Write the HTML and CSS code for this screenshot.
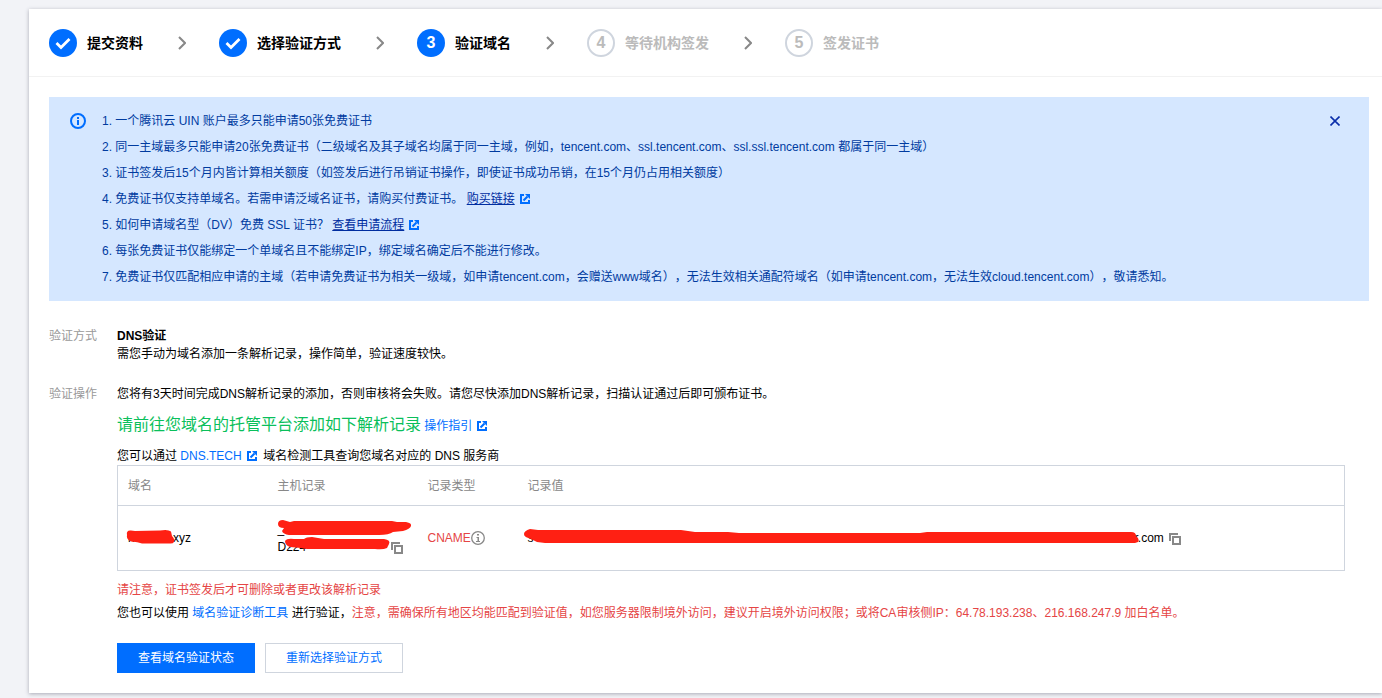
FILE: index.html
```
<!DOCTYPE html>
<html lang="zh-CN">
<head>
    <meta charset="UTF-8">
    <meta name="viewport" content="width=device-width, initial-scale=1.0">
    <title>验证域名</title>
    <link rel="stylesheet" href="styles.css">
</head>
<body>
    <!-- shared icons -->
    <svg class="sprite" aria-hidden="true">
        <symbol id="icon-check" viewBox="0 0 28 28">
            <path d="M7.500 14l4.500 4.500 8.500-8.500" fill="none" stroke="#fff" stroke-width="2.800"/>
        </symbol>
        <symbol id="icon-arrow" viewBox="0 0 8 14">
            <path d="M1 1l6 6-6 6" fill="none" stroke="#888" stroke-width="2"/>
        </symbol>
        <symbol id="icon-link" viewBox="0 0 10 10">
            <path d="M4 1H1v8h8V6M3.500 6.500l4-4" fill="none" stroke="#006eff" stroke-width="2"/>
            <path d="M5 0h5v5z" fill="#006eff"/>
        </symbol>
        <symbol id="icon-copy" viewBox="0 0 12 12">
            <path d="M1 8V1h8M5 4h6v7H4V4z" fill="none" stroke="#888" stroke-width="2"/>
        </symbol>
        <symbol id="icon-info" viewBox="0 0 16 16">
            <circle cx="8" cy="8" r="7" fill="none" stroke="currentColor" stroke-width="2"/>
            <path d="M7 4h2v2H7zM7 7h2v5H7z" fill="currentColor"/>
        </symbol>
        <symbol id="icon-info-thin" viewBox="0 0 14 14">
            <circle cx="7" cy="7" r="6.300" fill="none" stroke="currentColor" stroke-width="1.300"/>
            <path d="M6 3h2v1.500H6zM5.500 6H8v4h1v1H5v-1h1.500V7h-1z" fill="currentColor"/>
        </symbol>
    </svg>

    <main class="card">
        <ol class="steps">
            <li class="step">
                <span class="step-num"><svg width="28" height="28"><use href="#icon-check"/></svg></span>
                <span>提交资料</span>
                <svg class="step-arrow"><use href="#icon-arrow"/></svg>
            </li>
            <li class="step">
                <span class="step-num"><svg width="28" height="28"><use href="#icon-check"/></svg></span>
                <span>选择验证方式</span>
                <svg class="step-arrow"><use href="#icon-arrow"/></svg>
            </li>
            <li class="step">
                <span class="step-num">3</span>
                <span>验证域名</span>
                <svg class="step-arrow"><use href="#icon-arrow"/></svg>
            </li>
            <li class="step disabled">
                <span class="step-num">4</span>
                <span>等待机构签发</span>
                <svg class="step-arrow"><use href="#icon-arrow"/></svg>
            </li>
            <li class="step disabled">
                <span class="step-num">5</span>
                <span>签发证书</span>
            </li>
        </ol>

        <div class="content">
            <div class="alert">
                <svg class="alert-icon"><use href="#icon-info"/></svg>
                <div class="alert-list">
                    <p>1. 一个腾讯云 UIN 账户最多只能申请50张免费证书</p>
                    <p>2. 同一主域最多只能申请20张免费证书（二级域名及其子域名均属于同一主域，例如，tencent.com、ssl.tencent.com、ssl.ssl.tencent.com 都属于同一主域）</p>
                    <p>3. 证书签发后15个月内皆计算相关额度（如签发后进行吊销证书操作，即使证书成功吊销，在15个月仍占用相关额度）</p>
                    <p>4. 免费证书仅支持单域名。若需申请泛域名证书，请购买付费证书。 <a href="#">购买链接</a><svg class="link-icon"><use href="#icon-link"/></svg></p>
                    <p>5. 如何申请域名型（DV）免费 SSL 证书？ <a href="#">查看申请流程</a><svg class="link-icon"><use href="#icon-link"/></svg></p>
                    <p>6. 每张免费证书仅能绑定一个单域名且不能绑定IP，绑定域名确定后不能进行修改。</p>
                    <p>7. 免费证书仅匹配相应申请的主域（若申请免费证书为相关一级域，如申请tencent.com，会赠送www域名），无法生效相关通配符域名（如申请tencent.com，无法生效cloud.tencent.com），敬请悉知。</p>
                </div>
                <button class="close" aria-label="关闭">
                    <svg width="10" height="10" viewBox="0 0 10 10"><path d="M.5.5l9 9M9.500.5l-9 9" stroke="#0a2eaa" stroke-width="1.600"/></svg>
                </button>
            </div>

            <div class="row">
                <div class="row-label">验证方式</div>
                <div class="row-value">
                    <p><b>DNS验证</b></p>
                    <p>需您手动为域名添加一条解析记录，操作简单，验证速度较快。</p>
                </div>
            </div>

            <div class="row">
                <div class="row-label">验证操作</div>
                <div class="row-value">
                    <p>您将有3天时间完成DNS解析记录的添加，否则审核将会失败。请您尽快添加DNS解析记录，扫描认证通过后即可颁布证书。</p>
                    <p class="guide"><span>请前往您域名的托管平台添加如下解析记录</span> <a href="#">操作指引</a><svg class="link-icon"><use href="#icon-link"/></svg></p>
                    <p>您可以通过 <a href="#">DNS.TECH</a><svg class="link-icon"><use href="#icon-link"/></svg> &nbsp;域名检测工具查询您域名对应的 DNS 服务商</p>

                    <table class="records">
                        <thead>
                            <tr>
                                <th class="col-wide">域名</th>
                                <th class="col-wide">主机记录</th>
                                <th class="col-type">记录类型</th>
                                <th>记录值</th>
                            </tr>
                        </thead>
                        <tbody>
                            <tr>
                                <td>
                                    <span class="mask mask-domain">h
                                        <svg width="50" height="16" viewBox="0 0 50 16"><path d="M1 6Q0 1 5 1.500L9 2 34 1.500Q42 0 45 2.500L46 7Q49 10 48 13 47 15 43 14.500H16Q12 13 5 12.500 0 10 1 6z"/></svg>
                                    </span>xyz
                                </td>
                                <td>
                                    <span class="mask mask-host">_<br>D224
                                        <svg width="136" height="32" viewBox="0 0 136 32"><path d="M2 4Q2 0 7 0L14 2 18 1H116L121 2 130 2Q136 3 135 6 134 9 127 11L117 12Q113 15 103 15H13Q7 14 6 11L8 8Q2 8 2 4z"/><path d="M9 21Q11 18 18 19L28 19Q30 17 36 17L48 19H108Q115 20 113 24L111 28Q107 30 99 29H32Q28 29 25 28L14 27Q9 25 9 21z"/></svg>
                                    </span>
                                    <svg class="copy-icon"><use href="#icon-copy"/></svg>
                                </td>
                                <td class="type"><span>CNAME</span><svg class="info-icon"><use href="#icon-info-thin"/></svg></td>
                                <td>
                                    <span class="mask mask-value">s
                                        <svg width="618" height="18" viewBox="0 0 618 18"><path d="M1 5Q1 2 7 0L15 1H158L172 3H205L216 4H397L404 3H608Q613 3 613 7 617 10 615 13L612 14H22L14 13 6 9Q1 8 1 5z"/></svg>
                                    </span>r.com
                                    <svg class="copy-icon copy-value"><use href="#icon-copy"/></svg>
                                </td>
                            </tr>
                        </tbody>
                    </table>

                    <p class="notice danger">请注意，证书签发后才可删除或者更改该解析记录</p>
                    <p class="notice">您也可以使用 <a href="#">域名验证诊断工具</a> 进行验证，<span class="danger">注意，需确保所有地区均能匹配到验证值，如您服务器限制境外访问，建议开启境外访问权限；或将CA审核侧IP：64.78.193.238、216.168.247.9 加白名单。</span></p>

                    <div class="buttons">
                        <button class="btn primary">查看域名验证状态</button>
                        <button class="btn">重新选择验证方式</button>
                    </div>
                </div>
            </div>
        </div>
    </main>
</body>
</html>
```
FILE: styles.css
```
*{
    margin: 0;
    padding: 0;
    box-sizing: border-box;
}
body{
    background: #f2f3f7;
    color: #000;
    font-family: "Liberation Sans", "Noto Sans CJK SC", sans-serif;
    font-size: 12px;
    line-height: 18px;
    text-spacing-trim: space-all;
    padding: 9px 0 5px 29px;
}
a{
    color: #006eff;
    text-decoration: none;
}
.sprite{
    display: none;
}
.card{
    background: #fff;
    box-shadow: 0 1px 4px rgba(54, 58, 80, 0.4);
}

/* steps */
.steps{
    display: flex;
    list-style: none;
    padding: 20px 20px 19px;
    border-bottom: 1px solid #f2f2f2;
}
.step{
    display: flex;
    align-items: center;
    gap: 10px;
    font-size: 14px;
    font-weight: 700;
}
.step-num{
    display: flex;
    align-items: center;
    justify-content: center;
    width: 28px;
    height: 28px;
    border-radius: 50%;
    background: #006eff;
    color: #fff;
    font-size: 16px;
}
.step-arrow{
    width: 8px;
    height: 14px;
    margin: 0 33px 0 25px;
}
.disabled{
    color: #bbb;
}
.disabled .step-num{
    background: #fff;
    color: #bbb;
    border: 2px solid #cfd5de;
}

.content{
    padding: 20px 13px 20px 20px;
}

/* alert */
.alert{
    display: flex;
    align-items: flex-start;
    background: #d5e7ff;
    color: #003b9f;
    padding: 15px 29px 15px 21px;
    margin-bottom: 26px;
}
.alert-icon{
    flex: none;
    width: 16px;
    height: 16px;
    margin: 1px 16px 0 0;
    color: #006eff;
}
.alert-list{
    flex: 1;
    display: flex;
    flex-direction: column;
    gap: 8px;
}
.alert a{
    color: #002da0;
    text-decoration: underline;
}
.link-icon{
    width: 10px;
    height: 10px;
    margin-left: 5px;
    vertical-align: -1px;
}
.close{
    display: flex;
    padding: 4px 0;
    border: none;
    background: none;
    cursor: pointer;
}

/* form rows */
.row{
    display: flex;
    margin-bottom: 22px;
}
.row:last-child{
    margin-bottom: 0;
}
.row-label{
    flex: none;
    width: 68px;
    color: #999;
}
.row-value{
    flex: 1;
}
.guide{
    line-height: 24px;
    margin: 10px 0 9px;
}
.guide span{
    color: #0abf5b;
    font-size: 16px;
}
.danger{
    color: #e54545;
}

/* records table */
.records{
    width: calc(100% - 24px);
    border: 1px solid #cfd5de;
    border-collapse: collapse;
    table-layout: fixed;
    margin-bottom: 10px;
}
.records th{
    height: 40px;
    padding: 0 10px;
    color: #888;
    font-weight: 400;
    text-align: left;
    border-bottom: 1px solid #cfd5de;
}
.records td{
    height: 65px;
    padding: 0 10px;
    white-space: nowrap;
}
.col-wide{
    width: 150px;
}
.col-type{
    width: 100px;
}
.mask{
    display: inline-block;
    position: relative;
}
.mask svg{
    position: absolute;
    left: -2px;
    top: 0;
    fill: #ff2013;
}
.mask-domain{
    width: 45px;
}
.mask-host{
    width: 110px;
}
.mask-value{
    width: 607px;
}
.mask-value svg{
    left: -5px;
}
.copy-icon{
    width: 12px;
    height: 12px;
    vertical-align: -3px;
}
.copy-value{
    margin-left: 2px;
}
.type{
    color: #e54545;
}
.info-icon{
    width: 14px;
    height: 14px;
    color: #888;
    vertical-align: -3px;
}

.notice{
    margin-bottom: 5px;
}
.buttons{
    display: flex;
    gap: 10px;
    margin-top: 21px;
}
.btn{
    height: 30px;
    padding: 0 20px;
    border: 1px solid #cfd5de;
    background: #fff;
    color: #006eff;
    font: inherit;
    cursor: pointer;
}
.primary{
    background: #006eff;
    border-color: #006eff;
    color: #fff;
}
```
